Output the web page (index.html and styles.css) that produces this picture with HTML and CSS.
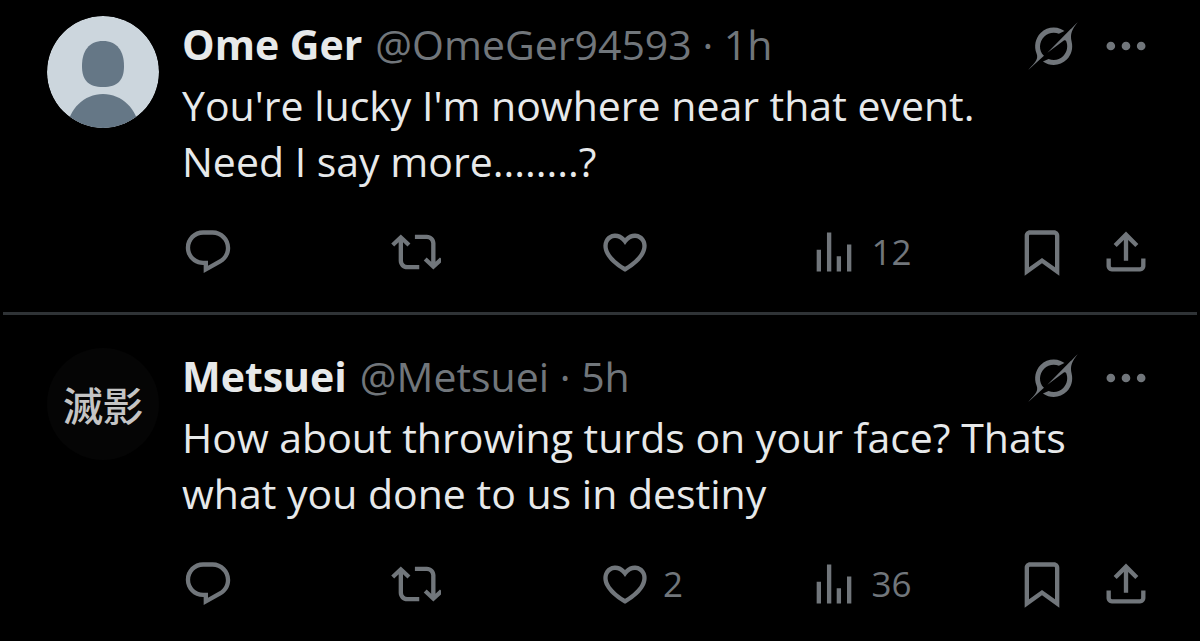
FILE: index.html
```html
<!DOCTYPE html>
<html lang="en">
<head>
  <meta charset="UTF-8" />
  <meta name="viewport" content="width=device-width, initial-scale=1.0"/>
  <title>Replies</title>
  <link rel="stylesheet" href="styles.css">
</head>
<body>

<!-- Shared icons -->
<svg class="sprite" aria-hidden="true">
  <symbol id="grok" viewBox="0 0 33 32"><path d="M12.745 20.54l10.97-8.19c.539-.4 1.307-.244 1.564.38 1.349 3.288.746 7.241-1.938 9.955-2.683 2.714-6.417 3.31-9.83 1.954l-3.728 1.745c5.347 3.697 11.84 2.782 15.898-1.324 3.219-3.255 4.216-7.692 3.284-11.693l.008.009c-1.351-5.878.332-8.227 3.782-13.031L33 0l-4.54 4.59v-.014L12.743 20.544m-2.263 1.987c-3.837-3.707-3.175-9.446.1-12.755 2.42-2.449 6.388-3.448 9.852-1.979l3.72-1.737c-.67-.49-1.53-1.017-2.515-1.387-4.455-1.854-9.789-.931-13.41 2.728-3.483 3.523-4.579 8.94-2.697 13.561 1.405 3.454-.899 5.898-3.22 8.364C1.49 30.2.666 31.074 0 32l10.478-9.466"/></symbol>
  <symbol id="more" viewBox="0 0 24 24"><path d="M3 12c0-1.1.9-2 2-2s2 .9 2 2-.9 2-2 2-2-.9-2-2zm9 2c1.1 0 2-.9 2-2s-.9-2-2-2-2 .9-2 2 .9 2 2 2zm7 0c1.1 0 2-.9 2-2s-.9-2-2-2-2 .9-2 2 .9 2 2 2z"/></symbol>
  <symbol id="reply" viewBox="0 0 24 24"><path d="M1.751 10c0-4.42 3.584-8 8.005-8h4.366c4.49 0 8.129 3.64 8.129 8.13 0 2.96-1.607 5.68-4.196 7.11l-8.054 4.46v-3.69h-.067c-4.49.1-8.183-3.51-8.183-8.01zm8.005-6c-3.317 0-6.005 2.69-6.005 6 0 3.37 2.77 6.08 6.138 6.01l.351-.01h1.761v2.3l5.087-2.81c1.951-1.08 3.163-3.13 3.163-5.36 0-3.39-2.744-6.13-6.129-6.13H9.756z"/></symbol>
  <symbol id="repost" viewBox="0 0 23 24"><path d="M4.5 3.88l4.432 4.14-1.364 1.46L5.5 7.55V16c0 1.1.896 2 2 2H13v2H7.5c-2.209 0-4-1.79-4-4V7.55L1.432 9.48.068 8.02 4.5 3.88zM16.5 6H11V4h5.5c2.209 0 4 1.79 4 4v8.45l2.068-1.93 1.364 1.46-4.432 4.14-4.432-4.14 1.364-1.46 2.068 1.93V8c0-1.1-.896-2-2-2z"/></symbol>
  <symbol id="like" viewBox="0 0 24 24"><path d="M16.697 5.5c-1.222-.06-2.679.51-3.89 2.16l-.805 1.09-.806-1.09C9.984 6.01 8.526 5.44 7.304 5.5c-1.243.07-2.349.78-2.91 1.91-.552 1.12-.633 2.78.479 4.82 1.074 1.97 3.257 4.27 7.129 6.61 3.87-2.34 6.052-4.64 7.126-6.61 1.111-2.04 1.03-3.7.477-4.82-.561-1.13-1.666-1.84-2.908-1.91zm4.187 7.69c-1.351 2.48-4.001 5.12-8.379 7.67l-.503.3-.504-.3c-4.379-2.55-7.029-5.19-8.382-7.67-1.36-2.5-1.41-4.86-.514-6.67.887-1.79 2.647-2.91 4.601-3.01 1.651-.09 3.368.56 4.798 2.01 1.429-1.45 3.146-2.1 4.796-2.01 1.954.1 3.714 1.22 4.601 3.01.896 1.81.846 4.17-.514 6.67z"/></symbol>
  <symbol id="views" viewBox="0 0 24 24"><path d="M8.75 21V3h2v18h-2zM18 21V8.5h2V21h-2zM4 21l.004-10h2L6 21H4zm9.248 0v-7h2v7h-2z"/></symbol>
  <symbol id="bookmark" viewBox="0 0 24 24"><path d="M4 4.5C4 3.12 5.119 2 6.5 2h11C18.881 2 20 3.12 20 4.5v18.44l-8-5.71-8 5.71V4.5zM6.5 4c-.276 0-.5.22-.5.5v14.56l6-4.29 6 4.29V4.5c0-.28-.224-.5-.5-.5h-11z"/></symbol>
  <symbol id="share" viewBox="0 0 24 24"><path d="M12 2.59l5.7 5.7-1.41 1.42L13 6.41V16h-2V6.41l-3.3 3.3-1.41-1.42L12 2.59zM21 15l-.02 3.51c0 1.38-1.12 2.49-2.5 2.49H5.5C4.11 21 3 19.88 3 18.5V15h2v3.5c0 .28.22.5.5.5h12.98c.28 0 .5-.22.5-.5L19 15h2z"/></symbol>
</svg>

<main class="thread">
  <article class="post">
    <svg class="avatar" viewBox="0 0 112 112" role="img" aria-label="Ome Ger">
      <clipPath id="round"><circle cx="56" cy="56" r="56"/></clipPath>
      <g clip-path="url(#round)">
        <rect width="112" height="112" fill="#ccd6dd"/>
        <path d="M56 25c14 0 21 10 21 25 0 14-6 21-21 21s-21-7-21-21c0-15 7-25 21-25z" fill="#657786"/>
        <path d="M20 112c2-19 17-34 36-34s34 15 36 34z" fill="#657786"/>
      </g>
    </svg>
    <div class="content">
      <header class="post-header">
        <strong class="name">Ome Ger</strong>
        <span class="meta">@OmeGer94593 · 1h</span>
        <div class="tools">
          <button aria-label="Explain this post"><svg class="icon grok"><use href="#grok"/></svg></button>
          <button aria-label="More"><svg class="icon"><use href="#more"/></svg></button>
        </div>
      </header>
      <p class="text">You're lucky I'm nowhere near that event.<br>Need I say more........?</p>
      <div class="actions">
        <button aria-label="Reply"><svg class="icon"><use href="#reply"/></svg></button>
        <button aria-label="Repost"><svg class="icon repost"><use href="#repost"/></svg></button>
        <button aria-label="Like"><svg class="icon"><use href="#like"/></svg></button>
        <button aria-label="12 views"><svg class="icon"><use href="#views"/></svg>12</button>
        <div class="actions-end">
          <button aria-label="Bookmark"><svg class="icon"><use href="#bookmark"/></svg></button>
          <button aria-label="Share"><svg class="icon"><use href="#share"/></svg></button>
        </div>
      </div>
    </div>
  </article>

  <article class="post">
    <div class="avatar avatar-dark">滅影</div>
    <div class="content">
      <header class="post-header">
        <strong class="name">Metsuei</strong>
        <span class="meta">@Metsuei · 5h</span>
        <div class="tools">
          <button aria-label="Explain this post"><svg class="icon grok"><use href="#grok"/></svg></button>
          <button aria-label="More"><svg class="icon"><use href="#more"/></svg></button>
        </div>
      </header>
      <p class="text">How about throwing turds on your face? Thats<br>what you done to us in destiny</p>
      <div class="actions">
        <button aria-label="Reply"><svg class="icon"><use href="#reply"/></svg></button>
        <button aria-label="Repost"><svg class="icon repost"><use href="#repost"/></svg></button>
        <button aria-label="2 likes"><svg class="icon"><use href="#like"/></svg>2</button>
        <button aria-label="36 views"><svg class="icon"><use href="#views"/></svg>36</button>
        <div class="actions-end">
          <button aria-label="Bookmark"><svg class="icon"><use href="#bookmark"/></svg></button>
          <button aria-label="Share"><svg class="icon"><use href="#share"/></svg></button>
        </div>
      </div>
    </div>
  </article>
</main>

</body>
</html>
```
FILE: styles.css
```css
* {
  box-sizing: border-box;
}
body {
  margin: 0;
  background: #000;
  color: #e7e9ea;
  font-family: "Open Sans", "Noto Sans", sans-serif;
  font-size: 41px;
  line-height: 56px;
}
.sprite {
  display: none;
}
.thread {
  display: flex;
  flex-direction: column;
  gap: 17px;
  padding: 0 3px;
}
.post {
  display: flex;
  gap: 23px;
  padding: 16px 45px 34px 44px;
  border-bottom: 3px solid #2f3336;
}
.post:last-child {
  padding-bottom: 0;
  border-bottom: none;
}
.avatar {
  flex: none;
  width: 112px;
  height: 112px;
  border-radius: 50%;
}
.avatar-dark {
  display: flex;
  align-items: center;
  justify-content: center;
  background: #050505;
  color: #c4c4c4;
  font-family: "Noto Sans CJK JP", sans-serif;
  font-size: 40px;
  font-weight: 500;
}
.content {
  flex: 1;
  min-width: 0;
}
.post-header {
  display: flex;
  align-items: center;
  gap: 13px;
  height: 56px;
  white-space: nowrap;
}
.name {
  font-weight: 700;
}
.meta {
  color: #71767b;
}
.tools {
  display: flex;
  align-items: center;
  gap: 22px;
  margin-left: auto;
  padding-top: 3px;
}
.text {
  margin: 5px 0 37px;
}
.actions {
  display: grid;
  grid-template-columns: repeat(4, 1fr) auto;
}
.actions-end {
  display: flex;
  gap: 32px;
}
button {
  display: flex;
  align-items: center;
  gap: 12px;
  padding: 0;
  border: none;
  background: none;
  color: #71767b;
  font-family: inherit;
  font-size: 35px;
  line-height: 52px;
  cursor: pointer;
}
.icon {
  display: block;
  width: 52px;
  height: 52px;
  fill: currentColor;
}
.repost {
  width: 50px;
}
.grok {
  width: 50px;
  height: 48px;
}
```
